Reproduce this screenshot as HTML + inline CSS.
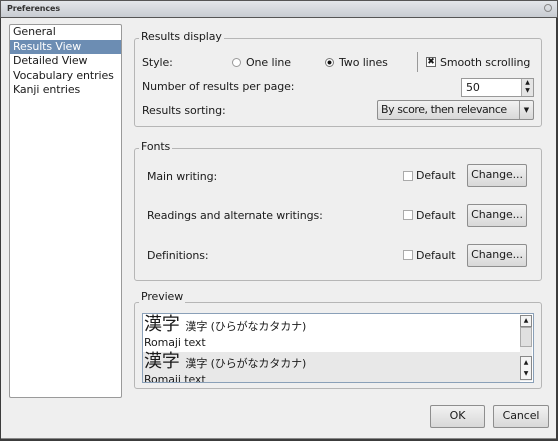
<!DOCTYPE html>
<html><head><meta charset="utf-8"><style>
*{box-sizing:border-box;margin:0;padding:0}
body{width:558px;height:441px;overflow:hidden;background:#3c3c3c;font-family:"DejaVu Sans","Noto Sans CJK JP",sans-serif;font-size:11px;color:#1a1a1a;position:relative;letter-spacing:-0.1px}
.a{position:absolute}
#title{left:0;top:0;width:558px;height:18px;background:linear-gradient(#e3e6ea,#c8ccd2);border:1px solid #555;font-size:8px;font-weight:bold;padding:3px 0 0 6px;color:#333}
#win{left:1px;top:18px;width:555px;height:421px;background:#efefef;border-bottom:1px solid #888}
.list{left:9px;top:24px;width:113px;height:374px;background:#fff;border:1px solid #9a9a9a;border-radius:2px}
.list div{height:14.5px;padding-left:3px;line-height:14px}
.sel{background:#6c8db3;color:#fff}
.gb{border:1px solid #b6b6b6;border-radius:3px}
.gl{background:#efefef;padding:0 2px;line-height:12px}
.btn{border:1px solid #8e8e8e;border-radius:2px;background:linear-gradient(#f2f2f2,#d8d8d8);text-align:center;line-height:20px}
.cb{width:10px;height:10px;border:1px solid #aaa;background:#fff}
</style></head><body>
<div class="a" id="title">Preferences</div>
<div class="a" style="right:6px;top:4px;width:8px;height:8px;border:1px solid #888;border-radius:50%"></div>
<div class="a" id="win"></div>
<div class="a list"><div>General</div><div class="sel">Results View</div><div>Detailed View</div><div>Vocabulary entries</div><div>Kanji entries</div></div>

<div class="a gb" style="left:134px;top:38px;width:408px;height:89px"></div>
<div class="a gl" style="left:139px;top:31px">Results display</div>
<div class="a" style="left:142px;top:56px">Style:</div>
<div class="a" style="left:232px;top:58px;width:9px;height:9px;border:1px solid #999;border-radius:50%;background:#fff"></div>
<div class="a" style="left:246px;top:56px">One line</div>
<div class="a" style="left:325px;top:58px;width:9px;height:9px;border:1px solid #777;border-radius:50%;background:radial-gradient(#111 35%,#fff 45%)"></div>
<div class="a" style="left:339px;top:56px">Two lines</div>
<div class="a" style="left:417px;top:52px;width:1px;height:20px;background:#999"></div>
<div class="a" style="left:426px;top:57px;width:10px;height:10px;border:1px solid #666;background:#fff;font-size:9px;line-height:8px;text-align:center;font-weight:bold">✖</div>
<div class="a" style="left:440px;top:56px">Smooth scrolling</div>
<div class="a" style="left:142px;top:80px">Number of results per page:</div>
<div class="a" style="left:461px;top:78px;width:73px;height:19px;border:1px solid #999;background:#fff;padding:2px 0 0 4px">50</div>
<div class="a" style="left:521px;top:79px;width:12px;height:17px;background:#e4e4e4;border-left:1px solid #aaa;font-size:6px;line-height:8px;text-align:center">▲<br>▼</div>
<div class="a" style="left:142px;top:104px">Results sorting:</div>
<div class="a btn" style="left:377px;top:100px;width:157px;height:20px;text-align:left;padding-left:3px;line-height:18px;letter-spacing:-0.45px">By score, then relevance<span style="position:absolute;right:0;top:0;width:14px;height:18px;border-left:1px solid #999;font-size:7px;text-align:center;letter-spacing:0">▼</span></div>

<div class="a gb" style="left:134px;top:148px;width:408px;height:133px"></div>
<div class="a gl" style="left:139px;top:141px">Fonts</div>
<div class="a" style="left:147px;top:170px">Main writing:</div>
<div class="a" style="left:147px;top:209px">Readings and alternate writings:</div>
<div class="a" style="left:147px;top:249px">Definitions:</div>
<div class="a cb" style="left:403px;top:171px"></div><div class="a" style="left:416px;top:169px">Default</div>
<div class="a cb" style="left:403px;top:210px"></div><div class="a" style="left:416px;top:209px">Default</div>
<div class="a cb" style="left:403px;top:250px"></div><div class="a" style="left:416px;top:249px">Default</div>
<div class="a btn" style="left:467px;top:164px;width:60px;height:23px">Change...</div>
<div class="a btn" style="left:467px;top:204px;width:60px;height:23px">Change...</div>
<div class="a btn" style="left:467px;top:244px;width:60px;height:23px">Change...</div>

<div class="a gb" style="left:134px;top:302px;width:408px;height:87px"></div>
<div class="a gl" style="left:139px;top:291px">Preview</div>
<div class="a" style="left:142px;top:313px;width:392px;height:70px;border:1px solid #8aa0b8;background:#fff;overflow:hidden">
 <div style="position:absolute;left:0;top:0;width:377px;height:38px;background:#fff"></div>
 <div style="position:absolute;left:0;top:38px;width:377px;height:32px;background:#e8e8e8"></div>
 <div style="position:absolute;left:1px;top:0;font-size:18px;line-height:22px">漢字 <span style="font-size:11px">漢字 (ひらがなカタカナ)</span></div>
 <div style="position:absolute;left:1px;top:22px">Romaji text</div>
 <div style="position:absolute;left:1px;top:37px;font-size:18px;line-height:22px">漢字 <span style="font-size:11px">漢字 (ひらがなカタカナ)</span></div>
 <div style="position:absolute;left:1px;top:59px">Romaji text</div>
 <div style="position:absolute;right:1px;top:1px;width:12px;height:66px;background:#ececec"></div>
 <div style="position:absolute;right:1px;top:1px;width:12px;height:12px;border:1px solid #888;background:#f4f4f4;font-size:6px;text-align:center;line-height:10px">▲</div>
 <div style="position:absolute;right:1px;top:13px;width:12px;height:20px;border:1px solid #aaa;background:#e0e0e0"></div>
 <div style="position:absolute;right:1px;top:42px;width:12px;height:24px;border:1px solid #888;background:#f4f4f4;font-size:6px;text-align:center;line-height:11px">▲<br>▼</div>
</div>

<div class="a btn" style="left:430px;top:405px;width:55px;height:23px">OK</div>
<div class="a btn" style="left:493px;top:405px;width:56px;height:23px">Cancel</div>
</body></html>
